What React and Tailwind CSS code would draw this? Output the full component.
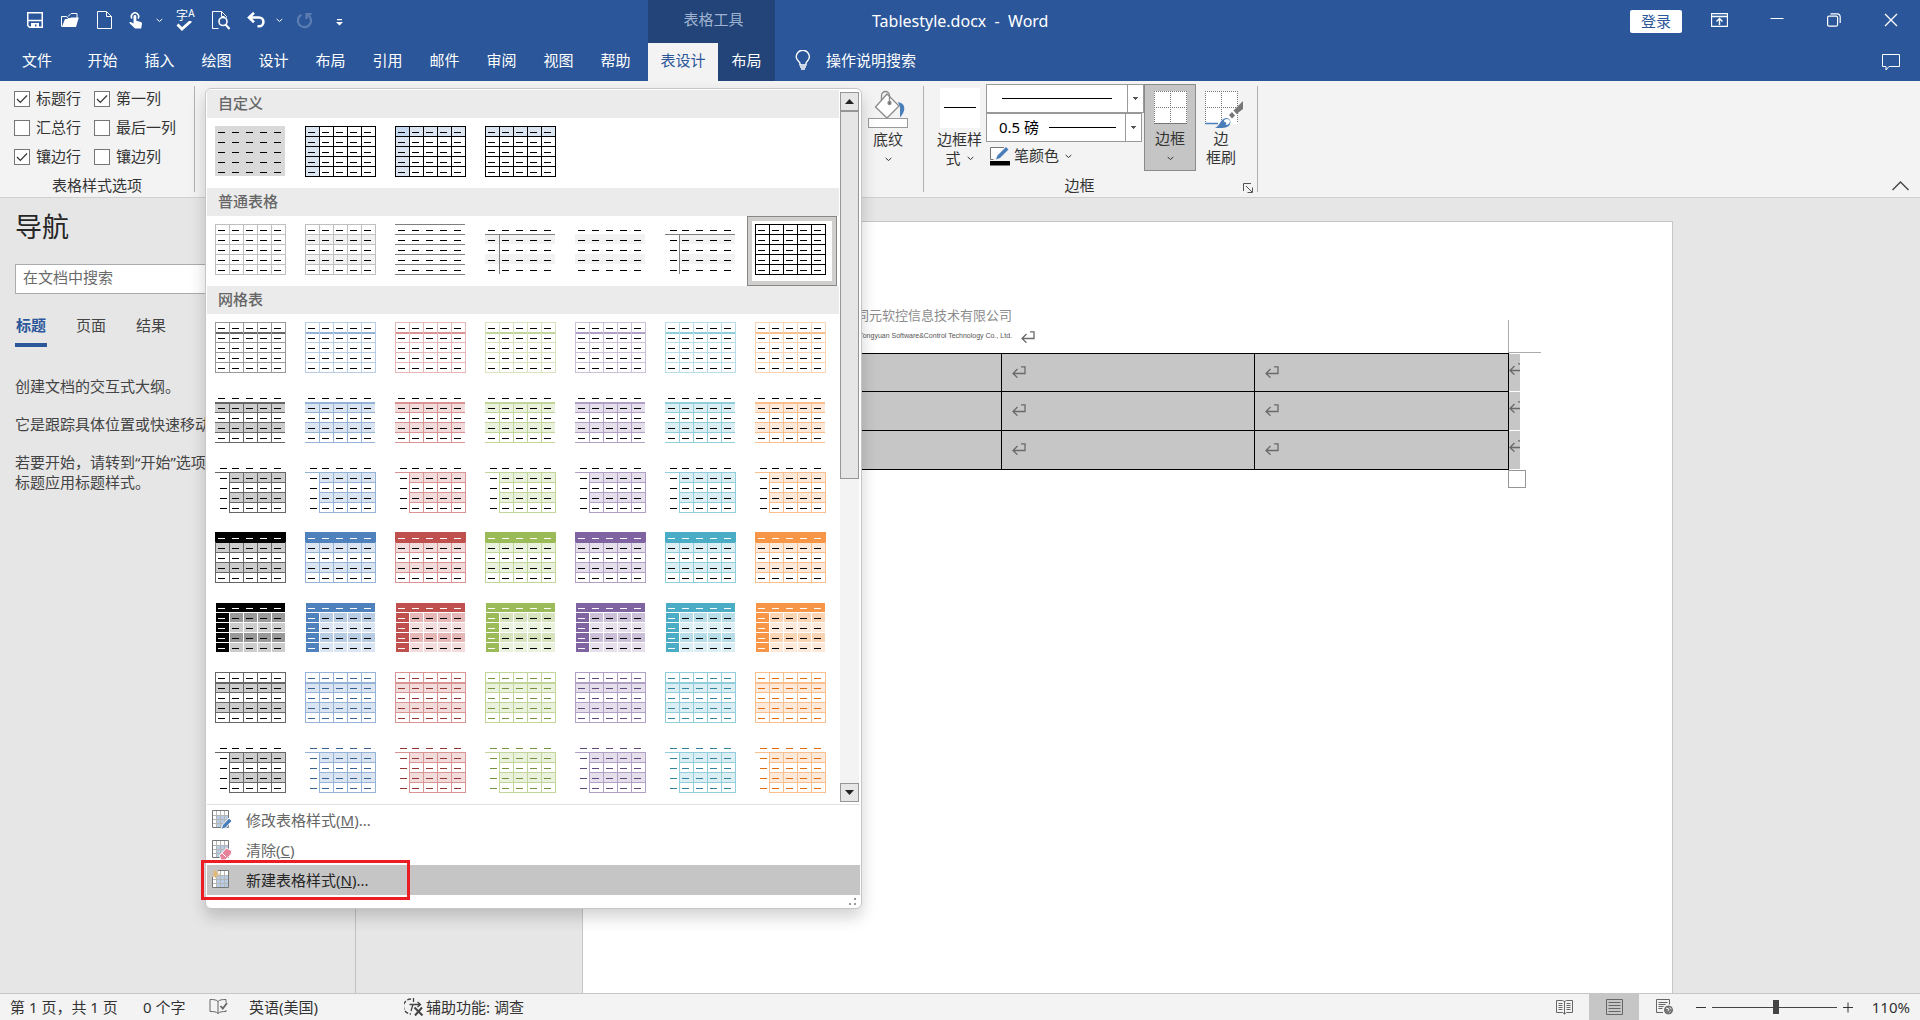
import React from 'react';

// Office theme accents used by the built-in table styles
const ACCENTS = [
  { name: '黑色', light: '#999999', line: '#666666', band: '#cccccc', band2: '#999999', solid: '#000000', text: '#000000' },
  { name: '着色 1', light: '#b8cce4', line: '#95b3d7', band: '#dbe5f1', band2: '#b8cce4', solid: '#4f81bd', text: '#366092' },
  { name: '着色 2', light: '#e5b8b7', line: '#d99594', band: '#f2dbdb', band2: '#e5b8b7', solid: '#c0504d', text: '#943634' },
  { name: '着色 3', light: '#d6e3bc', line: '#c2d69b', band: '#eaf1dd', band2: '#d6e3bc', solid: '#9bbb59', text: '#76923c' },
  { name: '着色 4', light: '#ccc0d9', line: '#b2a1c7', band: '#e5dfec', band2: '#ccc0d9', solid: '#8064a2', text: '#5f497a' },
  { name: '着色 5', light: '#b6dde8', line: '#92cddc', band: '#daeef3', band2: '#b6dde8', solid: '#4bacc6', text: '#31849b' },
  { name: '着色 6', light: '#fbd4b4', line: '#fabf8f', band: '#fde9d9', band2: '#fbd4b4', solid: '#f79646', text: '#e36c0a' },
];

const STEPS = [0, 1, 2, 3, 4, 5];
const CELLS = [0, 1, 2, 3, 4];

const rect = (x, y, w, h, fill) => ({ x, y, w, h, fill });
const bands = (fill, x = 0) => [rect(x, 10, 70 - x, 10, fill), rect(x, 30, 70 - x, 10, fill)];
const grid = (color, x = 0, y = 0) => [
  ...STEPS.filter((i) => i * 14 >= x).map((i) => rect(i * 14, y, 1, 51 - y, color)),
  ...STEPS.filter((i) => i * 10 >= y).map((i) => rect(x, i * 10, 71 - x, 1, color)),
];
const rules = (color, from = 0) => STEPS.slice(from).map((i) => rect(0, i * 10, 70, 1, color));

const CUSTOM = [
  { name: '自定义 1', shapes: [rect(0, 0, 70, 50, '#d9d9d9')] },
  { name: '自定义 2', shapes: [rect(0, 0, 14, 50, '#dbe5f1'), ...grid('#000')] },
  { name: '自定义 3', shapes: [rect(0, 0, 14, 50, '#dbe5f1'), rect(14, 0, 56, 10, '#dbe5f1'), rect(0, 0, 14, 10, '#c6d9f1'), ...grid('#000')] },
  { name: '自定义 4', shapes: [rect(0, 0, 70, 10, '#dbe5f1'), ...grid('#000')] },
];

const PLAIN = [
  { name: '网格型浅色', shapes: grid('#bfbfbf') },
  { name: '无格式表格 1', shapes: [...bands('#f2f2f2'), ...grid('#bfbfbf')] },
  { name: '无格式表格 2', shapes: rules('#7f7f7f') },
  { name: '无格式表格 3', shapes: [...bands('#f2f2f2'), rect(0, 10, 70, 1, '#7f7f7f'), rect(14, 10, 1, 40, '#7f7f7f')] },
  { name: '无格式表格 4', shapes: bands('#f2f2f2') },
  { name: '无格式表格 5', shift: true, shapes: [...bands('#f2f2f2', 14), rect(0, 10, 70, 1, '#7f7f7f'), rect(14, 10, 1, 40, '#7f7f7f')] },
  { name: '网格型', selected: true, shapes: grid('#000') },
];

const openGrid = (c) => [...bands(c.band, 14), ...grid(c.line, 14, 10), rect(0, 10, 71, 1, c.line)];

const GRID_ROWS = [
  (c) => ({ shapes: [rect(0, 10, 70, 2, c.line), ...grid(c.light).filter((r) => !(r.y === 10 && r.h === 1))] }),
  (c) => ({
    shapes: [
      ...bands(c.band),
      rect(0, 10, 70, 2, c.line),
      ...rules(c.line, 2),
      ...[14, 28, 42, 56].map((x) => rect(x, 10, 1, 40, c.line)),
    ],
  }),
  (c) => ({ shift: true, shapes: openGrid(c) }),
  (c) => ({ head: '#fff', shapes: [...bands(c.band), ...grid(c.line), rect(0, 0, 71, 10, c.solid), rect(1, 10, 69, 1, c.solid)] }),
  (c) => ({
    head: '#fff',
    side: '#fff',
    shapes: [
      rect(1, 1, 69, 49, c.band),
      rect(15, 11, 55, 9, c.band2),
      rect(15, 31, 55, 9, c.band2),
      rect(1, 11, 13, 39, c.solid),
      ...[14, 28, 42, 56].map((x) => rect(x, 10, 1, 40, '#fff')),
      ...[10, 20, 30, 40].map((y) => rect(0, y, 71, 1, '#fff')),
      rect(1, 1, 69, 9, c.solid),
    ],
  }),
  (c) => ({ text: c.text, shapes: [...bands(c.band), ...grid(c.line), rect(0, 10, 71, 2, c.line)] }),
  (c) => ({ shift: true, text: c.text, shapes: openGrid(c) }),
];

const GRID = GRID_ROWS.flatMap((make, row) =>
  ACCENTS.map((c) => ({ name: `网格表 ${row + 1} - ${c.name}`, ...make(c) }))
);

const TABS = ['开始', '插入', '绘图', '设计', '布局', '引用', '邮件', '审阅', '视图', '帮助'];

function Thumb({ shapes, shift, text = '#000', head = text, side = text }) {
  return (
    <svg width="71" height="51" shapeRendering="crispEdges" aria-hidden="true" className="shrink-0">
      {shapes.map((s, i) => (
        <rect key={i} x={s.x} y={s.y} width={s.w} height={s.h} fill={s.fill} />
      ))}
      {CELLS.map((r) =>
        CELLS.map((c) => (
          <rect
            key={`${r}-${c}`}
            x={c * 14 + (shift && c === 0 ? 5 : 3)}
            y={r * 10 + 6}
            width="7"
            height="1"
            fill={r === 0 ? head : c === 0 ? side : text}
          />
        ))
      )}
    </svg>
  );
}

function GallerySection({ title, items }) {
  return (
    <section>
      <h3 className="h-7 bg-[#ebebeb] pl-[11px] text-[15px] font-medium leading-[27px] text-[#666666]">{title}</h3>
      <div className="grid grid-cols-[repeat(7,90px)]">
        {items.map(({ name, selected, ...thumb }) => (
          <button
            key={name}
            type="button"
            aria-label={name}
            className={
              selected
                ? 'flex h-[70px] border border-[#878787] bg-[#d0cfce] p-1'
                : 'flex h-[70px] pl-2 pt-2'
            }
          >
            {selected ? (
              <span className="flex h-[60px] w-20 bg-white pl-[3px] pt-[3px]">
                <Thumb {...thumb} />
              </span>
            ) : (
              <Thumb {...thumb} />
            )}
          </button>
        ))}
      </div>
    </section>
  );
}

function Chevron({ className }) {
  return (
    <svg width="7" height="5" viewBox="0 0 7 5" fill="none" stroke="currentColor" strokeWidth="1" className={className}>
      <path d="M.7 1l2.8 2.5L6.3 1" />
    </svg>
  );
}

function ReturnMark() {
  return (
    <svg width="14" height="12" viewBox="0 0 14 12" fill="none" stroke="#6a6a6a" strokeWidth="1.3" className="shrink-0">
      <path d="M9 .8h4v6.7H1M5.5 3L1 7.5 5.500 11.700" />
    </svg>
  );
}

function CheckOption({ label, checked }) {
  return (
    <label className="flex h-4 items-start gap-[6px] leading-[14px]">
      <span className="grid">
        <input
          type="checkbox"
          defaultChecked={checked}
          className="peer col-start-1 row-start-1 size-4 appearance-none border border-[#767676] bg-white"
        />
        <svg
          viewBox="0 0 16 16"
          fill="none"
          stroke="#333"
          strokeWidth="1.2"
          className="pointer-events-none invisible col-start-1 row-start-1 size-4 peer-checked:visible"
        >
          <path d="M3 8l3.300 3.500L13 4.500" />
        </svg>
      </span>
      {label}
    </label>
  );
}

function QuickAccess() {
  return (
    <div className="flex h-10 items-center pl-[17px] *:flex *:h-8 *:items-center *:justify-center">
      <button type="button" aria-label="保存" className="w-[35px]">
        <svg width="16" height="16" viewBox="0 0 16 16" fill="none" stroke="currentColor" strokeWidth="1.500">
          <path d="M.75.75h14.500v14.500H2.500L.75 13.500z" />
          <path d="M1 8.500h14" />
          <path d="M4 11h8v4.500H9.500V12.500H8v3H4z" fill="currentColor" stroke="none" />
        </svg>
      </button>
      <button type="button" aria-label="打开" className="w-[35px]">
        <svg width="18" height="16" viewBox="0 0 18 16" fill="none" stroke="currentColor">
          <path d="M.5 14.500v-10h5l1.500 2h2M7 4.500l3-3h6v6" />
          <path d="M.8 15L4 7h4.500l1.500-1.500h7.800L15 15z" fill="currentColor" stroke="none" />
        </svg>
      </button>
      <button type="button" aria-label="新建" className="w-[35px]">
        <svg width="15" height="18" viewBox="0 0 15 18" fill="none" stroke="currentColor">
          <path d="M.5.5h9l5 5v12H.5zM9.500.5v5h5" />
        </svg>
      </button>
      <button type="button" aria-label="触摸/鼠标模式" className="w-7">
        <svg width="14" height="17" viewBox="0 0 14 17" fill="currentColor">
          <path d="M4.500 4.500a1.400 1.400 0 012.800 0v4.200l4.500 1.200c.9.300 1.300 1 1.200 1.900l-.8 4.700H6L.6 11.300c-.5-.8.400-1.700 1.300-1.200l2.600 1.500z" />
          <path d="M3 6.500a3.600 3.600 0 116 0" fill="none" stroke="currentColor" strokeWidth="1.600" />
        </svg>
      </button>
      <button type="button" aria-label="触摸模式选项" className="w-[18px]"><Chevron /></button>
      <button type="button" aria-label="拼写和语法" className="w-[35px]">
        <span className="grid h-5 w-[19px] grid-cols-[12px_7px] text-[12px] leading-[11px]">
          <span>字</span>
          <span className="text-[10px] leading-[7px]">A</span>
          <svg width="18" height="10" viewBox="0 0 18 10" fill="none" stroke="currentColor" strokeWidth="2.800">
            <path d="M1.500 3.500l4.500 4.500L15 0" />
          </svg>
        </span>
      </button>
      <button type="button" aria-label="打印预览" className="w-[35px]">
        <svg width="18" height="19" viewBox="0 0 18 19" fill="none" stroke="currentColor">
          <path d="M6.500 17.500h-6V.5h9l5 5v1M9.500.5v5h3" />
          <circle cx="11" cy="10.500" r="4" strokeWidth="1.600" />
          <path d="M13.500 13.500l4 4.500" strokeWidth="2" />
        </svg>
      </button>
      <button type="button" aria-label="撤消" className="w-[37px]">
        <svg width="19" height="16" viewBox="0 0 19 16" fill="none" stroke="currentColor" strokeWidth="2.600">
          <path d="M2 5.500h10a4.300 4.300 0 010 8.800H10.500M7 .8L2 5.500l5 4.800" />
        </svg>
      </button>
      <button type="button" aria-label="撤消列表" className="w-2"><Chevron /></button>
      <button type="button" aria-label="重复" className="w-[42px] text-[#5c7db2]">
        <svg width="17" height="17" viewBox="0 0 17 17" fill="none" stroke="currentColor" strokeWidth="2.200">
          <path d="M5.500 2.700A6.600 6.600 0 1012 3M15.500 2H10.500v5" />
        </svg>
      </button>
      <button type="button" aria-label="自定义快速访问工具栏" className="w-7 pt-1">
        <svg width="7" height="7" viewBox="0 0 7 7" fill="currentColor">
          <path d="M1 0h5v1.200H1zM0 3h7L3.500 6.500z" />
        </svg>
      </button>
    </div>
  );
}

function TitleBar() {
  return (
    <header className="flex h-[81px] bg-[#2b579a] text-white">
      <div className="flex w-[648px] shrink-0 flex-col justify-between">
        <QuickAccess />
        <nav className="flex h-[38px] pb-1">
          <button type="button" className="w-[74px]">文件</button>
          {TABS.map((tab) => (
            <button key={tab} type="button" className="w-[57px]">{tab}</button>
          ))}
        </nav>
      </div>
      <div className="flex w-[127px] shrink-0 flex-col justify-between bg-[#224478]">
        <div className="pl-1 text-center leading-[38px] text-[#9fb3d1]">表格工具</div>
        <div className="flex h-[38px]">
          <button type="button" className="w-[70px] bg-[#f3f3f3] pb-1 text-[#2b579a]">表设计</button>
          <button type="button" className="w-[57px] pb-1">布局</button>
        </div>
      </div>
      <div className="flex min-w-0 flex-1 flex-col justify-between">
        <div className="flex h-[43px] justify-between pl-[97px]">
          <h1 className="whitespace-pre text-[16px] leading-[42px]">Tablestyle.docx  -  Word</h1>
          <div className="flex h-10 items-center pr-[22px]">
            <button type="button" className="mt-[2px] flex h-[23px] w-[52px] items-center justify-center rounded-xs bg-white text-[#2b579a]">登录</button>
            <button type="button" aria-label="功能区显示选项" className="ml-[29px]">
              <svg width="17" height="14" viewBox="0 0 17 14" fill="none" stroke="currentColor">
                <path d="M.5.5h16v13H.5zM.5 3.500h16" strokeWidth="1.300" />
                <path d="M8.500 12V5.500M5.500 8.500l3-3 3 3" strokeWidth="1.400" />
              </svg>
            </button>
            <button type="button" aria-label="最小化" className="ml-[42px]">
              <svg width="14" height="14" viewBox="0 0 14 14" stroke="currentColor"><path d="M.5 5.500h13" /></svg>
            </button>
            <button type="button" aria-label="还原" className="ml-[43px]">
              <svg width="14" height="14" viewBox="0 0 14 14" fill="none" stroke="currentColor" strokeWidth="1.200">
                <rect x=".6" y="3.200" width="10" height="10" rx="1.500" />
                <path d="M3.500.9h6.500a3.200 3.200 0 013.200 3.200v6" />
              </svg>
            </button>
            <button type="button" aria-label="关闭" className="ml-[43px]">
              <svg width="14" height="14" viewBox="0 0 14 14" stroke="currentColor" strokeWidth="1.300"><path d="M1 1l12 12M13 1L1 13" /></svg>
            </button>
          </div>
        </div>
        <div className="flex h-[38px] items-center justify-between pl-5 pr-5">
          <button type="button" className="flex items-center gap-[15px] pb-1">
            <svg width="16" height="20" viewBox="0 0 16 20" fill="none" stroke="currentColor" strokeWidth="1.400">
              <path d="M5 15v-1.500C5 11.500 1.200 10.500 1.200 6.800a6.600 6.600 0 0113.200 0C14.400 10.500 11 11.500 11 13.500V15z" />
              <path d="M5 17h6M6 19h4" />
            </svg>
            操作说明搜索
          </button>
          <button type="button" aria-label="批注">
            <svg width="18" height="17" viewBox="0 0 18 17" fill="none" stroke="currentColor">
              <path d="M.5.5h17v12H7l-3 3.500v-3.500H.5z" />
            </svg>
          </button>
        </div>
      </div>
    </header>
  );
}

function Separator() {
  return <div className="my-[5px] w-px shrink-0 bg-[#b1b1b1]" />;
}

function Ribbon() {
  return (
    <div className="flex h-[117px] border-b border-[#cfcfcf] bg-[#f3f3f3] text-[#333333]">
      <fieldset className="flex w-[194px] shrink-0 flex-col justify-between pb-1 pt-[10px]">
        <div className="grid grid-cols-[80px_1fr] gap-y-[13px] pl-[14px]">
          <CheckOption label="标题行" checked />
          <CheckOption label="第一列" checked />
          <CheckOption label="汇总行" />
          <CheckOption label="最后一列" />
          <CheckOption label="镶边行" checked />
          <CheckOption label="镶边列" />
        </div>
        <div className="text-center leading-4">表格样式选项</div>
      </fieldset>
      <Separator />
      <div className="flex w-[728px] shrink-0 justify-end pr-[15px] pt-[9px]">
        <button type="button" className="flex w-10 flex-col items-center">
          <svg width="40" height="38" viewBox="0 0 40 38" fill="none" stroke="#8a8a8a" strokeWidth="1.300">
            <path d="M19 4L7.500 17 19 28l12-12z" fill="#fff" />
            <path d="M13.500 11V5.500a4 4 0 018 0V13" />
            <circle cx="21.500" cy="13" r="1.500" fill="#666" />
            <path d="M30 12c7 1 9 8 2 15.500V17z" fill="#4a7ebb" stroke="none" />
            <rect x=".5" y="28.500" width="39" height="9" fill="#fff" stroke="#999" strokeWidth="1" />
          </svg>
          <span className="mt-[2px] leading-[19px]">底纹</span>
          <Chevron className="mt-2" />
        </button>
      </div>
      <Separator />
      <div className="flex w-[333px] shrink-0 flex-col justify-between pb-1 pt-[3px]">
        <div className="flex">
          <button type="button" className="ml-3 flex w-[47px] flex-col items-center pt-1">
            <svg width="40" height="40" shapeRendering="crispEdges">
              <rect width="40" height="40" fill="#fff" />
              <rect x="4" y="19" width="32" height="1" fill="#000" />
            </svg>
            <span className="mt-[2px] leading-[19px]">
              边框样
              <span className="flex items-center justify-center gap-[6px]">式<Chevron /></span>
            </span>
          </button>
          <div className="ml-[3px] flex w-[158px] flex-col">
            <div className="relative h-[29px]">
              <select aria-label="笔样式" className="h-[29px] w-full appearance-none border border-[#999999] bg-white">
                <option></option>
              </select>
              <svg width="158" height="29" className="pointer-events-none absolute inset-0" shapeRendering="crispEdges">
                <rect x="16" y="14" width="110" height="1" />
                <rect x="141" y="1" width="1" height="27" fill="#999" />
                <path d="M146 13h6l-3 3z" fill="#555" />
              </svg>
            </div>
            <div className="relative h-[29px]">
              <select aria-label="笔划粗细" className="h-[29px] w-[156px] appearance-none border border-[#999999] bg-white pl-3 text-black">
                <option>0.5 磅</option>
              </select>
              <svg width="156" height="29" className="pointer-events-none absolute inset-0" shapeRendering="crispEdges">
                <rect x="63" y="14" width="67" height="1" />
                <rect x="139" y="1" width="1" height="27" fill="#999" />
                <path d="M144 13h6l-3 3z" fill="#555" />
              </svg>
            </div>
            <button type="button" className="flex h-7 items-center gap-[4px] pl-1">
              <svg width="20" height="20" viewBox="0 0 20 20" fill="none">
                <path d="M14 1.500H.5v12h3" stroke="#777" fill="#fff" />
                <path d="M6 13.500l1.500-4L16 1l2.500 2.500-8.500 8.500z" fill="#4a7ebb" />
                <path d="M0 15h20v4.500H0z" fill="#000" />
              </svg>
              <span className="pb-[2px]">笔颜色</span>
              <Chevron className="ml-[2px]" />
            </button>
          </div>
          <button type="button" aria-pressed="true" className="flex h-[87px] w-[52px] flex-col items-center border border-[#8a8a8a] bg-[#c5c5c5] pt-[6px]">
            <svg width="33" height="33" viewBox="0 0 33 33" fill="none" stroke="#777" shapeRendering="crispEdges">
              <rect width="33" height="33" fill="#fff" stroke="none" />
              <path d="M0 .5h33M0 16.500h33M.5 0v32M16.500 0v32M32.500 0v32" strokeDasharray="1 1" />
              <path d="M0 32.500h33" />
            </svg>
            <span className="mt-[5px] leading-[19px]">边框</span>
            <Chevron className="mt-2" />
          </button>
          <button type="button" className="ml-[3px] flex w-11 flex-col items-center pt-[7px]">
            <svg width="38" height="38" viewBox="0 0 38 38" fill="none" className="ml-[5px]">
              <rect width="33" height="33" fill="#fff" />
              <path d="M0 .5h33M0 16.500h33M.5 0v32M16.500 0v32M32.500 0v32" stroke="#777" strokeDasharray="1 1" shapeRendering="crispEdges" />
              <path d="M0 32.500h13" stroke="#4a7ebb" strokeWidth="1.500" />
              <path d="M10 37c5-2 5-9 11-10 5 0 6 6 2 8.500-3 2-8 1.500-13 1.500z" fill="#4a7ebb" />
              <path d="M18.500 30.500a3.500 3.500 0 016.500-.5c0 2.500-2 4-4.500 4 1.500-1.500 1-3-2-3.500z" fill="#fff" />
              <path d="M24 24l3-3 3 3.500-3 3zM28.500 19.500L38 10v8l-6.500 5z" fill="#777" />
            </svg>
            <span className="w-8 text-center leading-[19px]">边<br />框刷</span>
          </button>
        </div>
        <div className="flex items-end">
          <div className="flex-1 pr-2 text-center leading-4">边框</div>
          <button type="button" aria-label="边框设置" className="mr-1">
            <svg width="10" height="10" viewBox="0 0 10 10" fill="none" stroke="#555">
              <path d="M.5 8V.5H8M3 3l6 6M9.500 4.500v5h-5" />
            </svg>
          </button>
        </div>
      </div>
      <Separator />
      <div className="flex flex-1 items-end justify-end pb-[6px] pr-[11px]">
        <button type="button" aria-label="折叠功能区">
          <svg width="17" height="10" viewBox="0 0 17 10" fill="none" stroke="#444" strokeWidth="1.400"><path d="M.5 9l8-8 8 8" /></svg>
        </button>
      </div>
    </div>
  );
}

function NavigationPane() {
  return (
    <aside className="flex w-[356px] shrink-0 flex-col border-r border-[#c0c0c0] px-[15px] text-[#444444]">
      <h2 className="mt-3 text-[27px] leading-[34px] text-[#262626]">导航</h2>
      <input
        type="text"
        aria-label="在文档中搜索"
        placeholder="在文档中搜索"
        className="mt-5 h-[30px] border border-[#ababab] bg-white pb-1 pl-[7px] placeholder:text-[#6a6a6a]"
      />
      <div className="mt-5 flex gap-7">
        <button type="button" className="w-8 border-b-4 border-[#2b579a] pb-[7px] font-bold leading-[22px] text-[#2b579a]">标题</button>
        <button type="button" className="w-8 pb-[11px] leading-[22px]">页面</button>
        <button type="button" className="w-8 pb-[11px] leading-[22px]">结果</button>
      </div>
      <div className="mt-[29px] flex flex-col gap-[18px] whitespace-nowrap leading-5">
        <p>创建文档的交互式大纲。</p>
        <p>它是跟踪具体位置或快速移动内容的好方法。</p>
        <p>若要开始，请转到“开始”选项卡，并对<br />标题应用标题样式。</p>
      </div>
    </aside>
  );
}

function Page() {
  return (
    <main className="flex min-w-0 flex-1 pl-[226px] pr-[247px] pt-[23px]">
      <div className="flex-1 border border-b-0 border-[#c6c6c6] bg-white pl-[164px] pr-[164px] pt-[85px]">
        <div className="flex items-end">
          <div className="w-[265px] shrink-0 whitespace-nowrap text-right">
            <div className="text-[13px] leading-[17px] text-[#8c8c8c]">同元软控信息技术有限公司</div>
            <div className="font-['Liberation_Sans'] text-[7px] leading-[23px] text-[#555555]">Tongyuan Software&amp;Control Technology Co., Ltd.</div>
          </div>
          <span className="mb-1 ml-[9px]"><ReturnMark /></span>
        </div>
        <div className="relative mt-[6px]">
          <table className="w-[calc(100%+12px)] table-fixed border-collapse">
            <tbody>
              {['h-[38px]', 'h-[39px]', 'h-[39px]'].map((height, row) => (
                <tr key={row} className={height}>
                  {[0, 1, 2].map((col) => (
                    <td key={col} className="border border-black bg-[#c6c6c6] pb-[2px] pl-[10px]"><ReturnMark /></td>
                  ))}
                  <td className="w-3 overflow-hidden border-y border-y-white bg-[#c6c6c6] pb-2">
                    <ReturnMark />
                  </td>
                </tr>
              ))}
            </tbody>
          </table>
          <div className="absolute -right-px -top-[33px] h-8 w-px bg-[#ababab]" />
          <div className="absolute -right-[33px] -top-px h-px w-[33px] bg-[#ababab]" />
          <div className="absolute -right-[18px] top-full size-[18px] border border-[#969696] bg-white" />
        </div>
      </div>
    </main>
  );
}

function SheetIcon({ children }) {
  return (
    <svg width="20" height="20" viewBox="0 0 20 20" fill="none">
      <rect x=".5" y=".5" width="16" height="17" fill="#fff" />
      <path d="M4.500 5h12v12.500h-12z" fill="#b8cce4" />
      <path d="M4.500 1v16M8.500 1v16M12.500 1v16M1 5.500h15M1 9.500h15M1 13.500h15" stroke="#b5b5b5" />
      <path d="M.5.5h16v17H.5z" stroke="#777" />
      {children}
    </svg>
  );
}

function StyleMenu() {
  return (
    <div className="absolute left-[205px] top-[88px] w-[657px] rounded-md border border-[#c6c6c6] bg-white p-px shadow-[0_8px_16px_rgba(0,0,0,0.18)]">
      <div className="flex border-b border-[#e1e1e1]">
        <div className="w-[632px]">
          <GallerySection title="自定义" items={CUSTOM} />
          <GallerySection title="普通表格" items={PLAIN} />
          <GallerySection title="网格表" items={GRID} />
        </div>
        <div className="mb-[2px] ml-px mt-[2px] flex w-[19px] flex-col bg-[#f3f3f3]">
          <button type="button" aria-label="向上滚动" className="flex h-[19px] items-center justify-center border border-[#969696] bg-[#e6e6e6]">
            <svg width="9" height="5" viewBox="0 0 9 5"><path d="M0 5l4.500-5L9 5z" fill="#222" /></svg>
          </button>
          <div className="h-[368px] border border-[#969696] bg-[#e6e6e6]" />
          <button type="button" aria-label="向下滚动" className="mt-auto flex h-[19px] items-center justify-center border border-[#969696] bg-[#e6e6e6]">
            <svg width="9" height="5" viewBox="0 0 9 5"><path d="M0 0h9L4.500 5z" fill="#222" /></svg>
          </button>
        </div>
      </div>
      <ul className="text-[#666666]">
        <li>
          <button type="button" className="flex h-[30px] w-full items-center gap-[14px] pl-[5px]">
            <SheetIcon>
              <path d="M9 19.500l1.500-4.500L17 8l3 3-6.500 7z" fill="#4a7ebb" stroke="#fff" />
            </SheetIcon>
            <span>修改表格样式(<u>M</u>)...</span>
          </button>
        </li>
        <li>
          <button type="button" className="flex h-[30px] w-full items-center gap-[14px] pl-[5px]">
            <SheetIcon>
              <path d="M7.500 15.500l7-7.500 5.500 3-1 3.500-6 5.500h-4z" fill="#e8819a" stroke="#fff" />
              <path d="M10 13l4 4" stroke="#fff" />
            </SheetIcon>
            <span>清除(<u>C</u>)</span>
          </button>
        </li>
        <li className="relative">
          <button type="button" className="flex h-[30px] w-full items-center gap-[14px] bg-[#c5c5c5] pl-[5px] text-[#262626]">
            <SheetIcon>
              <path d="M0 0h6v7H0z" fill="#c5c5c5" />
              <path d="M3.500 0v8M0 4h8M1 1l5 6M6 1L1 7" stroke="#e8b96a" />
            </SheetIcon>
            <span>新建表格样式(<u>N</u>)...</span>
          </button>
          <div className="pointer-events-none absolute -left-[6px] -top-[5px] h-10 w-[209px] border-[3px] border-[#ed1c24]" />
        </li>
      </ul>
      <div className="flex h-3 items-center justify-end pr-1">
        <svg width="7" height="7" fill="#999" shapeRendering="crispEdges">
          <rect x="5" width="2" height="2" />
          <rect x="5" y="5" width="2" height="2" />
          <rect y="5" width="2" height="2" />
        </svg>
      </div>
    </div>
  );
}

function StatusBar() {
  return (
    <footer className="flex h-[27px] shrink-0 items-center justify-between border-t border-[#c6c6c6] bg-[#f3f3f3] pl-[10px] text-[#333333]">
      <div className="flex items-center whitespace-nowrap">
        <span className="w-[133px]">第 1 页，共 1 页</span>
        <span className="w-[66px]">0 个字</span>
        <svg width="19" height="16" viewBox="0 0 19 16" fill="none" stroke="#666">
          <path d="M9 2.500C7.500.8 5 .5 1 .5v12c4 0 6.500.3 8 2V2.500C10.500.8 13 .5 17 .5v3M9 14.500c1.500-1.700 4-2 8-2V11" />
          <path d="M11.500 7l2.300 2.500L18 4" strokeWidth="1.800" />
        </svg>
        <span className="ml-[21px] w-[155px]">英语(美国)</span>
        <svg width="20" height="18" viewBox="0 0 20 18" fill="none" stroke="#444" strokeWidth="1.300">
          <path d="M7 1A7.500 7.500 0 007 16" strokeDasharray="4 1.500" />
          <path d="M9.500 0v4M5.500 6.500h11M13.500 4l3 2.500-3 2.500M9 6.500L7 13" />
          <path d="M10.500 9.500l8 8M18 9.500l-7 8" strokeWidth="2" />
        </svg>
        <span className="ml-[2px]">辅助功能: 调查</span>
      </div>
      <div className="flex h-full items-center pr-[10px]">
        <button type="button" aria-label="阅读视图" className="flex h-full w-[50px] items-center justify-center">
          <svg width="17" height="15" viewBox="0 0 17 15" fill="none" stroke="#666">
            <path d="M8.500 1.500L6.500.5h-6v12h6l2 1.500 2-1.500h6V.5h-6zM8.500 1v13" />
            <path d="M2.500 3.500h4M2.500 5.500h4M2.500 7.500h4M2.500 9.500h4M10.500 3.500h4M10.500 5.500h4M10.500 7.500h4M10.500 9.500h4" />
          </svg>
        </button>
        <button type="button" aria-label="页面视图" aria-pressed="true" className="flex h-full w-[50px] items-center justify-center bg-[#c6c6c6]">
          <svg width="17" height="16" viewBox="0 0 17 16" fill="none" stroke="#666">
            <path d="M.5.5h16v15H.5zM2.500 3.500h12M2.500 6.500h12M2.500 9.500h12M2.500 12.500h12" />
          </svg>
        </button>
        <button type="button" aria-label="Web 版式视图" className="flex h-full w-[51px] items-center justify-center">
          <svg width="17" height="16" viewBox="0 0 17 16" fill="none" stroke="#666">
            <path d="M7 13.500H.5V.5h13v5M2.500 3.500h9M2.500 5.500h7M2.500 7.500h5M2.500 9.500h4" />
            <circle cx="12.500" cy="11" r="4" fill="#777" />
            <path d="M10 9l3 1-1 2M13.500 8.500l2 1.500M13.500 13.500l1-1" stroke="#f3f3f3" />
          </svg>
        </button>
        <button type="button" aria-label="缩小" className="ml-[6px]">
          <svg width="10" height="11" stroke="#333"><path d="M0 5.500h10" /></svg>
        </button>
        <input
          type="range"
          aria-label="显示比例"
          min="10"
          max="210"
          defaultValue="112"
          className="mx-[6px] h-[14px] w-[125px] appearance-none bg-[linear-gradient(#444,#444)] bg-[length:100%_1px] bg-center bg-no-repeat [&::-webkit-slider-thumb]:h-[14px] [&::-webkit-slider-thumb]:w-[6px] [&::-webkit-slider-thumb]:appearance-none [&::-webkit-slider-thumb]:bg-[#444444]"
        />
        <button type="button" aria-label="放大">
          <svg width="10" height="11" stroke="#333"><path d="M0 5.500h10M5 .5v10" /></svg>
        </button>
        <span className="w-[57px] text-right">110%</span>
      </div>
    </footer>
  );
}

export default function App() {
  return (
    <div className="relative flex h-screen flex-col overflow-hidden bg-[#e6e6e6] font-['Noto_Sans','Noto_Sans_CJK_SC',sans-serif] text-[15px]">
      <TitleBar />
      <Ribbon />
      <div className="flex min-h-0 flex-1">
        <NavigationPane />
        <Page />
      </div>
      <StatusBar />
      <StyleMenu />
    </div>
  );
}
